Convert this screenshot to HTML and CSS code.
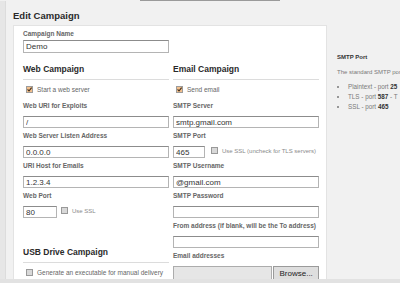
FILE: index.html
```html
<!DOCTYPE html>
<html lang="en">
<head>
  <meta charset="UTF-8" />
  <title>Edit Campaign</title>
  <link rel="stylesheet" href="styles.css">
</head>
<body>
  <div class="frame">
    <div class="topbar"><div class="seg"></div></div>
    <div class="shell">
      <div class="rail"></div>
      <div class="main">
        <h1>Edit Campaign</h1>
        <div class="layout">
          <form class="panel">
            <label class="lbl" for="campaignName">Campaign Name</label>
            <input class="txt name" type="text" id="campaignName" value="Demo" />

            <div class="cols">
              <div class="col">
                <h2>Web Campaign</h2>
                <div class="check-row">
                  <svg class="box" viewBox="0 0 7 7"><rect x="0.5" y="0.5" width="6" height="6" fill="#f4c08c" stroke="#9c9c9c"/><path d="M1.6 3.4 L3 5 L5.6 1.6" fill="none" stroke="#3a2a1a" stroke-width="1.1"/></svg>
                  <span>Start a web server</span>
                </div>

                <div class="field">
                  <label class="lbl">Web URI for Exploits</label>
                  <input class="txt" type="text" value="/" />
                </div>
                <div class="field">
                  <label class="lbl">Web Server Listen Address</label>
                  <input class="txt" type="text" value="0.0.0.0" />
                </div>
                <div class="field">
                  <label class="lbl">URI Host for Emails</label>
                  <input class="txt" type="text" value="1.2.3.4" />
                </div>
                <div class="field">
                  <label class="lbl">Web Port</label>
                  <div class="inline">
                    <input class="txt port" type="text" value="80" />
                    <svg class="box" viewBox="0 0 7 7"><rect x="0.5" y="0.5" width="6" height="6" fill="#d8d8d8" stroke="#999"/></svg>
                    <span class="hint">Use SSL</span>
                  </div>
                </div>

                <h2 class="usb">USB Drive Campaign</h2>
                <div class="check-row">
                  <svg class="box" viewBox="0 0 7 7"><rect x="0.5" y="0.5" width="6" height="6" fill="#d8d8d8" stroke="#999"/></svg>
                  <span>Generate an executable for manual delivery</span>
                </div>
              </div>

              <div class="col">
                <h2>Email Campaign</h2>
                <div class="check-row">
                  <svg class="box" viewBox="0 0 7 7"><rect x="0.5" y="0.5" width="6" height="6" fill="#f4c08c" stroke="#9c9c9c"/><path d="M1.6 3.4 L3 5 L5.6 1.6" fill="none" stroke="#3a2a1a" stroke-width="1.1"/></svg>
                  <span>Send email</span>
                </div>

                <div class="field">
                  <label class="lbl">SMTP Server</label>
                  <input class="txt" type="text" value="smtp.gmail.com" />
                </div>
                <div class="field">
                  <label class="lbl">SMTP Port</label>
                  <div class="inline wide">
                    <input class="txt smtp-port" type="text" value="465" />
                    <svg class="box" viewBox="0 0 7 7"><rect x="0.5" y="0.5" width="6" height="6" fill="#d8d8d8" stroke="#999"/></svg>
                    <span class="hint">Use SSL (uncheck for TLS servers)</span>
                  </div>
                </div>
                <div class="field">
                  <label class="lbl">SMTP Username</label>
                  <input class="txt" type="text" value="@gmail.com" />
                </div>
                <div class="field">
                  <label class="lbl">SMTP Password</label>
                  <input class="txt" type="password" />
                </div>
                <div class="field">
                  <label class="lbl">From address (if blank, will be the To address)</label>
                  <input class="txt" type="text" />
                </div>
                <div class="field">
                  <label class="lbl">Email addresses</label>
                  <div class="file">
                    <div class="file-box"></div>
                    <button type="button" class="browse">Browse...</button>
                  </div>
                </div>
              </div>
            </div>
          </form>

          <aside class="help">
            <div class="help-title">SMTP Port</div>
            <p>The standard SMTP port</p>
            <ul>
              <li>Plaintext - port <b>25</b></li>
              <li>TLS - port <b>587</b> - T</li>
              <li>SSL - port <b>465</b></li>
            </ul>
          </aside>
        </div>
      </div>
    </div>
    <div class="bottombar"></div>
  </div>
</body>
</html>
```

FILE: styles.css
```css
body {
  margin: 0;
  width: 400px;
  height: 283px;
  overflow: hidden;
  background: #f1f1f1;
  font-family: "Liberation Sans", Arial, sans-serif;
}

.frame {
  display: flex;
  flex-direction: column;
  height: 283px;
}

.topbar {
  height: 1px;
  flex: none;
  display: flex;
}

.topbar .seg {
  margin-left: 140px;
  width: 140px;
  background: #9a9a9a;
}

.shell {
  flex: 1;
  display: flex;
  min-height: 0;
}

.rail {
  flex: none;
  width: 5px;
  background: #e6e6e6;
  border-right: 1px solid #dcdcdc;
}

.main {
  flex: 1;
  min-width: 0;
  padding-left: 7px;
  display: flex;
  flex-direction: column;
  min-height: 0;
  overflow: hidden;
}

h1 {
  margin: 0 0 3px 0;
  padding-top: 9px;
  font-size: 9.5px;
  line-height: 12px;
  font-weight: bold;
  color: #2a2a2a;
}

.layout {
  flex: 1;
  display: flex;
  min-height: 0;
}

.panel {
  width: 314px;
  flex: none;
  box-sizing: border-box;
  margin: 0;
  border: 1px solid #e3e3e3;
  border-bottom: none;
  background: #fff;
  padding: 4px 9px 0;
  overflow: hidden;
}

.lbl {
  display: block;
  font-size: 6.5px;
  line-height: 8px;
  font-weight: bold;
  color: #666;
  white-space: nowrap;
}

.txt {
  display: block;
  box-sizing: border-box;
  width: 146px;
  height: 12px;
  margin: 0;
  padding: 0 2px;
  border: 1px solid #b4b4b4;
  border-top-color: #8c8c8c;
  border-radius: 0;
  font-family: "Liberation Sans", Arial, sans-serif;
  font-size: 8px;
  color: #333;
  background: #fff;
}

.name {
  height: 13px;
  margin-top: 2px;
}

.cols {
  display: grid;
  grid-template-columns: 146px 146px;
  column-gap: 4px;
  margin-top: 11px;
}

.col {
  display: flex;
  flex-direction: column;
}

h2 {
  margin: 0;
  padding-bottom: 5px;
  border-bottom: 1px solid #dcdcdc;
  font-size: 8.5px;
  line-height: 10px;
  font-weight: bold;
  color: #2a2a2a;
}

h2.usb {
  margin-top: 25px;
}

.check-row {
  display: flex;
  align-items: center;
  gap: 4px;
  height: 9px;
  margin: 5px 0 8px 3px;
  font-size: 6.5px;
  color: #666;
  white-space: nowrap;
}

.box {
  width: 7px;
  height: 7px;
  flex: none;
}

.field {
  margin-bottom: 4px;
}

.field .lbl {
  margin-bottom: 6px;
}

.inline {
  display: flex;
  align-items: flex-start;
  gap: 4px;
}

.inline.wide {
  gap: 6px;
}

.inline .box {
  margin-top: 1px;
}

.inline .hint {
  font-size: 6px;
  line-height: 10px;
  color: #8a8a8a;
  white-space: nowrap;
}

.inline.wide .hint {
  margin-left: -2px;
}

.port {
  width: 34px;
}

.smtp-port {
  width: 32px;
}

.file {
  display: flex;
  height: 14px;
}

.file-box {
  width: 100px;
  box-sizing: border-box;
  border: 1px solid #acacac;
  background: #e6e6e6;
}

.browse {
  width: 46px;
  height: 14px;
  margin: 0 0 0 1px;
  padding: 0;
  box-sizing: border-box;
  border: 1px solid #9a9a9a;
  border-radius: 0;
  background: #dedede;
  font-family: "Liberation Sans", Arial, sans-serif;
  font-size: 8px;
  color: #222;
}

.help {
  min-width: 0;
  overflow: hidden;
  padding: 28px 0 0 10px;
  font-size: 6px;
  color: #7a7a7a;
  white-space: nowrap;
}

.help-title {
  line-height: 8px;
  font-weight: bold;
  color: #333;
}

.help p {
  margin: 7px 0 6px 0;
  line-height: 8px;
}

.help ul {
  margin: 0;
  padding-left: 11px;
}

.help li {
  font-size: 6.3px;
  line-height: 10px;
}

.help b {
  color: #333;
}

.bottombar {
  height: 4px;
  flex: none;
  background: #e2e2e2;
}
```
